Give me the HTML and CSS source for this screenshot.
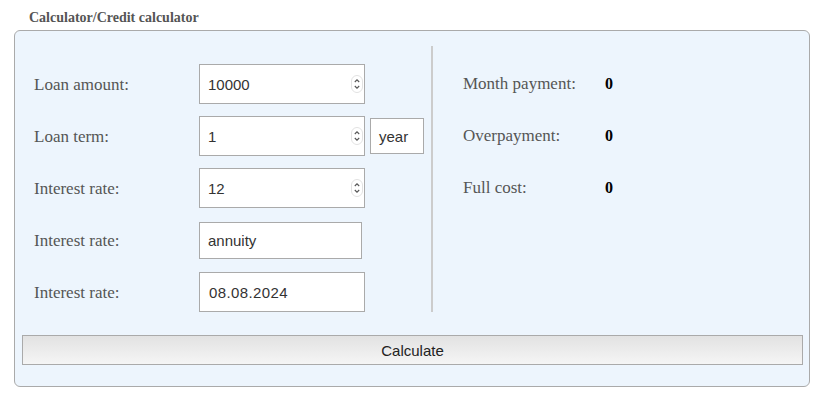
FILE: index.html
```html
<!DOCTYPE html>
<html>
<head>
<meta charset="utf-8">
<link rel="stylesheet" href="styles.css">
</head>
<body>
<div class="page">
  <div class="title">Calculator/Credit calculator</div>
  <div class="box">
    <div class="top">
      <div class="form">
        <div class="row">
          <span class="label">Loan amount:</span>
          <div class="field"><span>10000</span>
            <svg class="spin" width="12" height="18" viewBox="0 0 12 18"><rect x="0.5" y="0.5" width="11" height="17" rx="5.5" fill="#fff" stroke="#e2e2e2"/><path d="M3.8 7 L6 4.8 L8.2 7 M3.8 11 L6 13.2 L8.2 11" fill="none" stroke="#555" stroke-width="1.1"/></svg>
          </div>
        </div>
        <div class="row">
          <span class="label">Loan term:</span>
          <div class="field"><span>1</span>
            <svg class="spin" width="12" height="18" viewBox="0 0 12 18"><rect x="0.5" y="0.5" width="11" height="17" rx="5.5" fill="#fff" stroke="#e2e2e2"/><path d="M3.8 7 L6 4.8 L8.2 7 M3.8 11 L6 13.2 L8.2 11" fill="none" stroke="#555" stroke-width="1.1"/></svg>
          </div>
          <div class="unit">year</div>
        </div>
        <div class="row">
          <span class="label">Interest rate:</span>
          <div class="field"><span>12</span>
            <svg class="spin" width="12" height="18" viewBox="0 0 12 18"><rect x="0.5" y="0.5" width="11" height="17" rx="5.5" fill="#fff" stroke="#e2e2e2"/><path d="M3.8 7 L6 4.8 L8.2 7 M3.8 11 L6 13.2 L8.2 11" fill="none" stroke="#555" stroke-width="1.1"/></svg>
          </div>
        </div>
        <div class="row">
          <span class="label">Interest rate:</span>
          <div class="field select"><span>annuity</span></div>
        </div>
        <div class="row">
          <span class="label">Interest rate:</span>
          <div class="field date"><span>08.08.2024</span></div>
        </div>
      </div>
      <div class="divider"></div>
      <div class="results">
        <div class="res"><span class="rlabel">Month payment:</span><b>0</b></div>
        <div class="res"><span class="rlabel">Overpayment:</span><b>0</b></div>
        <div class="res"><span class="rlabel">Full cost:</span><b>0</b></div>
      </div>
    </div>
    <div class="btn">Calculate</div>
  </div>
</div>
</body>
</html>
```
FILE: styles.css
```css
html, body { margin: 0; padding: 0; background: #fff; }
.page { padding: 10px 19px 0 14px; width: 796px; }
.title {
  font-family: "Liberation Serif", serif;
  font-weight: bold;
  font-size: 14px;
  color: #555;
  line-height: 16px;
  margin-left: 15px;
  height: 20px;
}
.box {
  border: 1px solid #aaa;
  border-radius: 6px;
  background: #edf5fd;
  padding: 15px 6px 21px 7px;
  width: 781px;
}
.top { display: flex; align-items: stretch; }
.form {
  padding: 18px 0 0 12px;
  display: flex;
  flex-direction: column;
  gap: 12px;
  box-sizing: border-box;
  width: 409px;
}
.row { display: flex; align-items: center; height: 40px; }
.label {
  font-family: "Liberation Serif", serif;
  font-size: 17px;
  color: #555;
  width: 165px;
  flex: none;
  padding-top: 2px;
}
.field {
  box-sizing: border-box;
  width: 166px;
  height: 40px;
  border: 1px solid #aaa;
  background: #fff;
  display: flex;
  align-items: center;
  justify-content: space-between;
  padding: 0 1px 0 8px;
  font-family: "Liberation Sans", Arial, sans-serif;
  font-size: 15px;
  color: #333;
}
.field.select { width: 163px; height: 37px; }
.field.date { padding-left: 9px; letter-spacing: 0.4px; }
.spin { display: block; }
.unit {
  box-sizing: border-box;
  margin-left: 5px;
  width: 54px;
  height: 36px;
  border: 1px solid #aaa;
  background: #fff;
  display: flex;
  align-items: center;
  padding-left: 8px;
  font-family: "Liberation Sans", Arial, sans-serif;
  font-size: 15px;
  color: #333;
}
.divider { width: 2px; background: #ccc; flex: none; }
.results {
  padding: 18px 0 0 30px;
  display: flex;
  flex-direction: column;
  gap: 12px;
}
.res { display: flex; align-items: center; height: 40px; font-family: "Liberation Serif", serif; font-size: 17px; line-height: 20px; }
.rlabel { color: #555; width: 142px; }
.res b { color: #000; font-size: 16px; }
.btn {
  margin-top: 23px;
  box-sizing: border-box;
  height: 30px;
  border: 1px solid #aaa;
  background: linear-gradient(#e2e2e2, #f5f5f5);
  display: flex;
  align-items: center;
  justify-content: center;
  font-family: "Liberation Sans", Arial, sans-serif;
  font-size: 15px;
  color: #222;
}
```
